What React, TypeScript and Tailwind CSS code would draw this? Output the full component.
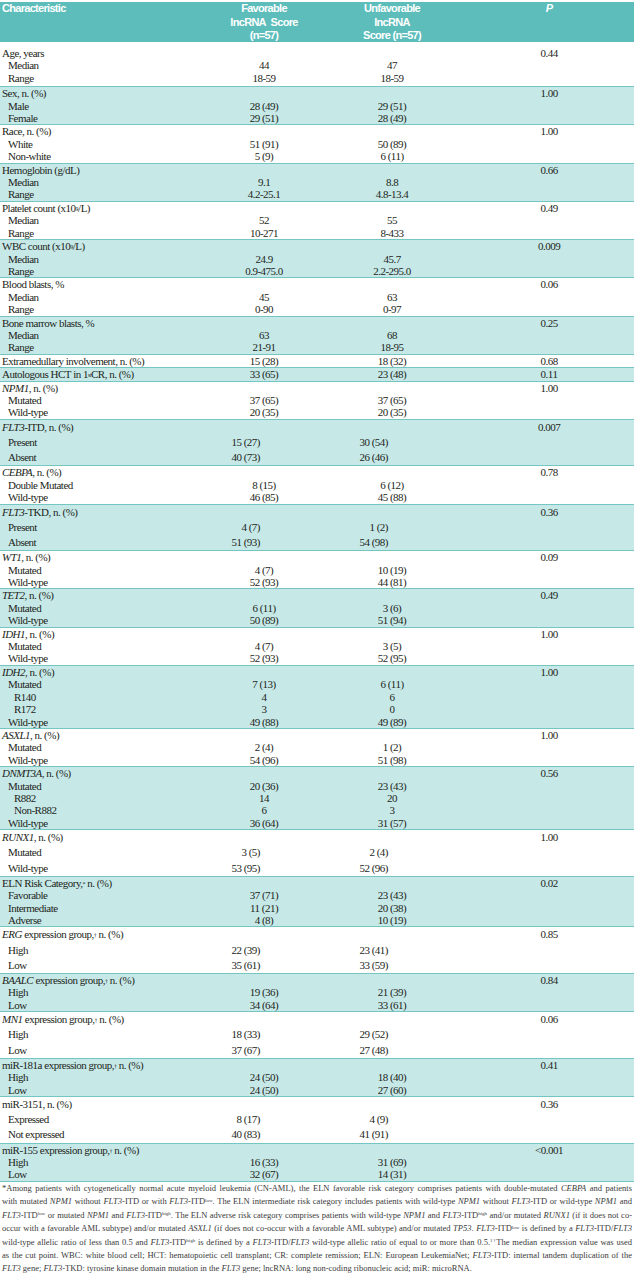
import React from 'react';

type Row = { label: React.ReactNode; fav?: string; unfav?: string; level?: number };
type Group = { rows: Row[]; p: string; spaced?: boolean };

const G = ({ children }: { children: React.ReactNode }) => <i>{children}</i>;
const Sup = ({ children }: { children: React.ReactNode }) => (
  <sup className="text-[6px] relative -top-[1px]">{children}</sup>
);

const two = (a: [string, string, string], b: [string, string, string]): Row[] => [
  { label: a[0], fav: a[1], unfav: a[2], level: 1 },
  { label: b[0], fav: b[1], unfav: b[2], level: 1 },
];

const groups: Group[] = [
  { p: '0.44', rows: [{ label: 'Age, years' }, ...two(['Median', '44', '47'], ['Range', '18-59', '18-59'])] },
  { p: '1.00', rows: [{ label: 'Sex, n. (%)' }, ...two(['Male', '28 (49)', '29 (51)'], ['Female', '29 (51)', '28 (49)'])] },
  { p: '1.00', rows: [{ label: 'Race, n. (%)' }, ...two(['White', '51 (91)', '50 (89)'], ['Non-white', '5 (9)', '6 (11)'])] },
  { p: '0.66', rows: [{ label: 'Hemoglobin (g/dL)' }, ...two(['Median', '9.1', '8.8'], ['Range', '4.2-25.1', '4.8-13.4'])] },
  {
    p: '0.49',
    rows: [{ label: <>Platelet count (x10<Sup>9</Sup>/L)</> }, ...two(['Median', '52', '55'], ['Range', '10-271', '8-433'])],
  },
  {
    p: '0.009',
    rows: [{ label: <>WBC count (x10<Sup>9</Sup>/L)</> }, ...two(['Median', '24.9', '45.7'], ['Range', '0.9-475.0', '2.2-295.0'])],
  },
  { p: '0.06', rows: [{ label: 'Blood blasts, %' }, ...two(['Median', '45', '63'], ['Range', '0-90', '0-97'])] },
  { p: '0.25', rows: [{ label: 'Bone marrow blasts, %' }, ...two(['Median', '63', '68'], ['Range', '21-91', '18-95'])] },
  { p: '0.68', rows: [{ label: 'Extramedullary involvement, n. (%)', fav: '15 (28)', unfav: '18 (32)' }] },
  { p: '0.11', rows: [{ label: <>Autologous HCT in 1<Sup>st</Sup>CR, n. (%)</>, fav: '33 (65)', unfav: '23 (48)' }] },
  {
    p: '1.00',
    rows: [{ label: <><G>NPM1</G>, n. (%)</> }, ...two(['Mutated', '37 (65)', '37 (65)'], ['Wild-type', '20 (35)', '20 (35)'])],
  },
  {
    p: '0.007',
    spaced: true,
    rows: [{ label: <><G>FLT3</G>-ITD, n. (%)</> }, ...two(['Present', '15 (27)', '30 (54)'], ['Absent', '40 (73)', '26 (46)'])],
  },
  {
    p: '0.78',
    rows: [{ label: <><G>CEBPA</G>, n. (%)</> }, ...two(['Double Mutated', '8 (15)', '6 (12)'], ['Wild-type', '46 (85)', '45 (88)'])],
  },
  {
    p: '0.36',
    spaced: true,
    rows: [{ label: <><G>FLT3</G>-TKD, n. (%)</> }, ...two(['Present', '4 (7)', '1 (2)'], ['Absent', '51 (93)', '54 (98)'])],
  },
  {
    p: '0.09',
    rows: [{ label: <><G>WT1</G>, n. (%)</> }, ...two(['Mutated', '4 (7)', '10 (19)'], ['Wild-type', '52 (93)', '44 (81)'])],
  },
  {
    p: '0.49',
    rows: [{ label: <><G>TET2</G>, n. (%)</> }, ...two(['Mutated', '6 (11)', '3 (6)'], ['Wild-type', '50 (89)', '51 (94)'])],
  },
  {
    p: '1.00',
    rows: [{ label: <><G>IDH1</G>, n. (%)</> }, ...two(['Mutated', '4 (7)', '3 (5)'], ['Wild-type', '52 (93)', '52 (95)'])],
  },
  {
    p: '1.00',
    rows: [
      { label: <><G>IDH2</G>, n. (%)</> },
      { label: 'Mutated', fav: '7 (13)', unfav: '6 (11)', level: 1 },
      { label: 'R140', fav: '4', unfav: '6', level: 2 },
      { label: 'R172', fav: '3', unfav: '0', level: 2 },
      { label: 'Wild-type', fav: '49 (88)', unfav: '49 (89)', level: 1 },
    ],
  },
  {
    p: '1.00',
    rows: [{ label: <><G>ASXL1</G>, n. (%)</> }, ...two(['Mutated', '2 (4)', '1 (2)'], ['Wild-type', '54 (96)', '51 (98)'])],
  },
  {
    p: '0.56',
    rows: [
      { label: <><G>DNMT3A</G>, n. (%)</> },
      { label: 'Mutated', fav: '20 (36)', unfav: '23 (43)', level: 1 },
      { label: 'R882', fav: '14', unfav: '20', level: 2 },
      { label: 'Non-R882', fav: '6', unfav: '3', level: 2 },
      { label: 'Wild-type', fav: '36 (64)', unfav: '31 (57)', level: 1 },
    ],
  },
  {
    p: '1.00',
    spaced: true,
    rows: [{ label: <><G>RUNX1</G>, n. (%)</> }, ...two(['Mutated', '3 (5)', '2 (4)'], ['Wild-type', '53 (95)', '52 (96)'])],
  },
  {
    p: '0.02',
    rows: [
      { label: <>ELN Risk Category,<Sup>*</Sup> n. (%)</> },
      { label: 'Favorable', fav: '37 (71)', unfav: '23 (43)', level: 1 },
      { label: 'Intermediate', fav: '11 (21)', unfav: '20 (38)', level: 1 },
      { label: 'Adverse', fav: '4 (8)', unfav: '10 (19)', level: 1 },
    ],
  },
  {
    p: '0.85',
    spaced: true,
    rows: [{ label: <><G>ERG</G> expression group,<Sup>†</Sup> n. (%)</> }, ...two(['High', '22 (39)', '23 (41)'], ['Low', '35 (61)', '33 (59)'])],
  },
  {
    p: '0.84',
    rows: [{ label: <><G>BAALC</G> expression group,<Sup>†</Sup> n. (%)</> }, ...two(['High', '19 (36)', '21 (39)'], ['Low', '34 (64)', '33 (61)'])],
  },
  {
    p: '0.06',
    spaced: true,
    rows: [{ label: <><G>MN1</G> expression group,<Sup>†</Sup> n. (%)</> }, ...two(['High', '18 (33)', '29 (52)'], ['Low', '37 (67)', '27 (48)'])],
  },
  {
    p: '0.41',
    rows: [{ label: <>miR-181a expression group,<Sup>†</Sup> n. (%)</> }, ...two(['High', '24 (50)', '18 (40)'], ['Low', '24 (50)', '27 (60)'])],
  },
  {
    p: '0.36',
    spaced: true,
    rows: [{ label: 'miR-3151, n. (%)' }, ...two(['Expressed', '8 (17)', '4 (9)'], ['Not expressed', '40 (83)', '41 (91)'])],
  },
  {
    p: '<0.001',
    rows: [{ label: <>miR-155 expression group,<Sup>†</Sup> n. (%)</> }, ...two(['High', '16 (33)', '31 (69)'], ['Low', '32 (67)', '14 (31)'])],
  },
];

function GroupBlock({ g, shaded, first }: { g: Group; shaded: boolean; first?: boolean }) {
  const lead = g.spaced ? 'leading-[15.2px]' : 'leading-[12.4px]';
  const valCls = g.spaced ? 'text-right pr-[68px]' : 'text-center';
  return (
    <div className={`border-b border-[#74c6c4] ${shaded ? 'bg-[#c6e9e8]' : 'bg-white'} ${first ? 'pb-[2px]' : ''}`}>
      {g.rows.map((r, i) => (
        <div key={i} className={`grid grid-cols-[200px_128px_128px_1fr] ${lead}`}>
          <div className={`whitespace-nowrap ${r.level === 2 ? 'pl-[14px]' : r.level === 1 ? 'pl-[8px]' : 'pl-[2px]'}`}>
            {r.label}
          </div>
          <div className={valCls}>{r.fav}</div>
          <div className={valCls}>{r.unfav}</div>
          <div className="text-center pl-[8px]">{i === 0 ? g.p : ''}</div>
        </div>
      ))}
    </div>
  );
}

const lo = <sup className="text-[5px]">low</sup>;
const hi = <sup className="text-[5px]">high</sup>;
const F = <i>FLT3</i>;

const noteLines: React.ReactNode[] = [
  <>*Among patients with cytogenetically normal acute myeloid leukemia (CN-AML), the ELN favorable risk category comprises patients with double-mutated <i>CEBPA</i> and patients</>,
  <>with mutated <i>NPM1</i> without {F}-ITD or with {F}-ITD{lo}. The ELN intermediate risk category includes patients with wild-type <i>NPM1</i> without {F}-ITD or wild-type <i>NPM1</i> and</>,
  <>{F}-ITD{lo} or mutated <i>NPM1</i> and {F}-ITD{hi}. The ELN adverse risk category comprises patients with wild-type <i>NPM1</i> and {F}-ITD{hi} and/or mutated <i>RUNX1</i> (if it does not co-</>,
  <>occur with a favorable AML subtype) and/or mutated <i>ASXL1</i> (if does not co-occur with a favorable AML subtype) and/or mutated <i>TP53</i>. {F}-ITD{lo} is defined by a {F}-ITD/{F}</>,
  <>wild-type allelic ratio of less than 0.5 and {F}-ITD{hi} is defined by a {F}-ITD/{F} wild-type allelic ratio of equal to or more than 0.5.<sup className="text-[5px]">1</sup><sup className="text-[5px]">†</sup>The median expression value was used</>,
  <>as the cut point. WBC: white blood cell; HCT: hematopoietic cell transplant; CR: complete remission; ELN: European LeukemiaNet; {F}-ITD: internal tandem duplication of the</>,
  <>{F} gene; {F}-TKD: tyrosine kinase domain mutation in the {F} gene; lncRNA: long non-coding ribonucleic acid; miR: microRNA.</>,
];

export default function App() {
  return (
    <div className="w-[634px] h-[1280px] bg-white overflow-hidden">
      <div className="pt-[2px] mb-[5px]">
        <div className="bg-[#5cbdbb] h-[40px] grid grid-cols-[200px_128px_128px_1fr] text-white font-bold text-[11px] leading-[13.5px] font-['Liberation_Sans_Narrow','Liberation_Sans',sans-serif] tracking-[-0.7px]">
          <div className="pl-[2px]">Characteristic</div>
          <div className="text-center">
            Favorable
            <br />
            lncRNA&nbsp; Score
            <br />
            (n=57)
          </div>
          <div className="text-center">
            Unfavorable
            <br />
            lncRNA
            <br />
            Score (n=57)
          </div>
          <div className="text-center pl-[8px] italic">P</div>
        </div>
      </div>

      <div className="font-['Liberation_Serif',serif] text-[11px] tracking-[-0.5px] text-[#231f20]">
        {groups.map((g, i) => (
          <GroupBlock key={i} g={g} shaded={i % 2 === 1} first={i === 0} />
        ))}
      </div>

      <div className="px-[2px] font-['Liberation_Serif',serif] text-[8.5px] leading-[13.4px] text-[#3a3a3a]">
        {noteLines.map((l, i) => (
          <div
            key={i}
            className={`whitespace-nowrap ${i < noteLines.length - 1 ? 'text-justify [text-align-last:justify]' : ''}`}
          >
            {l}
          </div>
        ))}
      </div>
    </div>
  );
}
